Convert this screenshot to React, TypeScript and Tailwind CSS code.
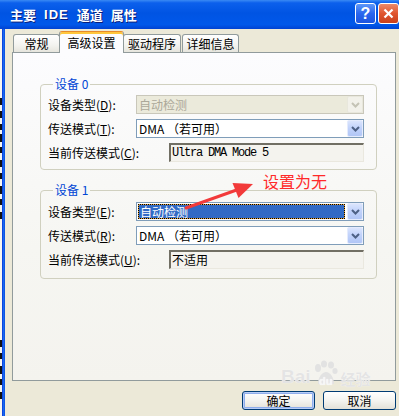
import React from "react";

const CJK = "font-['Noto_Sans_CJK_SC','Noto_Sans',sans-serif]";

function Chevron({ disabled }: { disabled?: boolean }) {
  return (
    <svg width="9" height="6" viewBox="0 0 9 6" className="block">
      <path
        d="M1 1 L4.5 4.5 L8 1"
        fill="none"
        stroke={disabled ? "#c4c3b5" : "#4d6185"}
        strokeWidth="2"
      />
    </svg>
  );
}

function DropBtn({ disabled }: { disabled?: boolean }) {
  return (
    <div
      className={`flex h-[17px] w-[16px] shrink-0 items-center justify-center rounded-[2px] border ${
        disabled
          ? "border-[#e8e7dc] bg-[#f2f1ea]"
          : "border-[#e4ebfd] bg-[linear-gradient(180deg,#dbe5fd_0%,#c2d3fb_45%,#b1c6f6_100%)]"
      }`}
    >
      <Chevron disabled={disabled} />
    </div>
  );
}

function Combo({
  text,
  disabled,
  selected,
}: {
  text: React.ReactNode;
  disabled?: boolean;
  selected?: boolean;
}) {
  return (
    <div
      className={`flex h-[19px] w-[228px] items-center border ${
        disabled ? "border-[#c9c7ba] bg-[#ebeadb]" : "border-[#7f9db9] bg-white"
      }`}
    >
      <div className="flex h-full flex-1 items-center pl-[1px] pr-[2px]">
        {selected ? (
          <span className="flex h-[15px] w-full border border-dotted border-black bg-[#e4a23a]">
            <span className="flex h-full w-full items-center bg-[#316ac5] pl-[1px] text-[12px] leading-none text-white">
              {text}
            </span>
          </span>
        ) : (
          <span
            className={`pl-[1px] text-[12px] leading-none ${
              disabled ? "text-[#aca899]" : "text-black"
            }`}
          >
            {text}
          </span>
        )}
      </div>
      <DropBtn disabled={disabled} />
    </div>
  );
}

function ReadBox({ children, mono }: { children: React.ReactNode; mono?: boolean }) {
  return (
    <div
      className={`flex h-[19px] w-[195px] items-center border-b border-l-2 border-r border-t-2 border-b-[#eae8df] border-l-[#716f64] border-r-[#eae8df] border-t-[#716f64] bg-[#f4f3ee] pl-[1px] text-[12px] leading-none text-black ${
        mono ? "font-['Liberation_Mono',monospace] tracking-[-1.2px]" : ""
      }`}
    >
      {children}
    </div>
  );
}

function Row({ label, children }: { label: React.ReactNode; children: React.ReactNode }) {
  return (
    <div className="flex items-center justify-between">
      <span className="text-[12px] leading-none text-black">{label}</span>
      {children}
    </div>
  );
}

function Group({
  title,
  children,
  className = "",
}: {
  title: string;
  children: React.ReactNode;
  className?: string;
}) {
  return (
    <fieldset
      className={`rounded-[4px] border border-[#d0d0bf] pl-[7px] pr-[12px] ${className}`}
    >
      <legend className="ml-[5px] px-[2px] text-[12px] leading-[14px] text-[#0046d5]">
        {title}
      </legend>
      <div className="flex flex-col gap-[5px]">{children}</div>
    </fieldset>
  );
}

function Tab({ label, active, w }: { label: string; active?: boolean; w: string }) {
  if (active) {
    return (
      <div
        className={`relative z-10 -mx-[1px] -mb-[1px] flex h-[22px] ${w} items-center justify-center rounded-t-[3px] border border-b-0 border-[#919b9c] border-t-[#e68b2c] bg-[#fcfcfe] text-[12px] text-black shadow-[inset_0_2px_0_#ffc73c]`}
      >
        <span className="mt-[1px]">{label}</span>
      </div>
    );
  }
  return (
    <div
      className={`flex h-[18px] ${w} items-center justify-center rounded-t-[3px] border border-b-0 border-[#919b9c] bg-[linear-gradient(180deg,#ffffff_0%,#f3f3ef_60%,#e6e5dd_100%)] text-[12px] text-black`}
    >
      {label}
    </div>
  );
}

function Btn({ label, def }: { label: string; def?: boolean }) {
  return (
    <div
      className={`flex h-[19px] w-[73px] items-center justify-center rounded-[3px] border border-[#003c74] bg-[linear-gradient(180deg,#ffffff_0%,#f4f4f0_50%,#e3e1d8_100%)] text-[12px] text-black ${
        def ? "shadow-[inset_0_0_0_1px_#b8cdf6,inset_0_0_0_2px_#8eadec]" : ""
      }`}
    >
      {label}
    </div>
  );
}

const u = (c: string) => <span className="underline underline-offset-1">{c}</span>;

// clipped right edges of the window behind the dialog
const behindMarks = [
  [98, 7], [111, 7], [124, 6], [134, 8], [147, 6], [160, 7], [173, 6], [186, 8],
  [199, 6], [212, 7], [340, 7], [353, 6], [366, 8], [379, 6], [392, 7],
];

export default function App() {
  return (
    <div className={`relative flex h-[416px] w-[399px] flex-col overflow-hidden bg-[#ece9d8] ${CJK}`}>
      {/* title bar */}
      <div className="flex h-[29px] shrink-0 items-center bg-[linear-gradient(180deg,#3a8af4_0%,#0c60ec_10%,#0054e3_45%,#0058ea_85%,#0042d2_100%)] pl-[10px]">
        <div className="flex flex-1 gap-[8px] text-[13px] font-bold text-white [text-shadow:1px_1px_0_#0a1e7a]">
          <span>主要</span>
          <span className="font-['Liberation_Sans',sans-serif] tracking-[1px]">IDE</span>
          <span>通道</span>
          <span>属性</span>
        </div>
        <div className="flex items-center gap-[2px] self-start pt-[3px]">
          <div className="flex h-[21px] w-[21px] items-center justify-center rounded-[3px] border border-white bg-[linear-gradient(180deg,#5f98f8_0%,#2a66ee_50%,#1d54df_100%)] font-['Liberation_Sans',sans-serif] text-[16px] font-bold leading-none text-white">
            ?
          </div>
          <div className="flex h-[21px] w-[21px] items-center justify-center rounded-[3px] border border-white bg-[linear-gradient(180deg,#ec8a6a_0%,#e0552e_50%,#c8401c_100%)]">
            <svg width="11" height="11" viewBox="0 0 11 11">
              <path d="M1.5 1.5 L9.5 9.5 M9.5 1.5 L1.5 9.5" stroke="white" strokeWidth="2.2" />
            </svg>
          </div>
        </div>
      </div>

      <div className="flex flex-1">
        {/* window behind */}
        <svg width="2" height="387" className="shrink-0 bg-[#f6f5f0]">
          {behindMarks.map(([y, h], i) => (
            <rect key={i} x="0" y={y - 29} width="2" height={h} fill="#111" />
          ))}
        </svg>
        {/* blue frame */}
        <div className="w-[3px] shrink-0 bg-[linear-gradient(90deg,#0831d9_0%,#166aee_50%,#0a48e0_100%)]" />

        <div className="flex flex-1 flex-col pl-[7px]">
          {/* tabs */}
          <div className="flex h-[23px] items-end pl-[1px]">
            <Tab label="常规" w="w-[47px]" />
            <Tab label="高级设置" active w="w-[65px]" />
            <Tab label="驱动程序" w="w-[58px]" />
            <div className="w-[1px]" />
            <Tab label="详细信息" w="w-[57px]" />
          </div>

          {/* panel */}
          <div className="h-[329px] w-[384px] border border-[#919b9c] bg-[linear-gradient(180deg,#fcfcfe_0%,#f6f6f2_60%,#f4f3ee_100%)] pl-[27px] pr-[18px] pt-[24px]">
            <Group title="设备 0" className="pb-[7px]">
              <div className="mt-[4px]">
                <Row label={<>设备类型({u("D")}):</>}>
                  <Combo text="自动检测" disabled />
                </Row>
              </div>
              <Row label={<>传送模式({u("T")}):</>}>
                <Combo text="DMA （若可用）" />
              </Row>
              <Row label={<>当前传送模式({u("C")}):</>}>
                <ReadBox mono>Ultra DMA Mode 5</ReadBox>
              </Row>
            </Group>

            <Group title="设备 1" className="mt-[13px] pb-[9px]">
              <div className="mt-[5px]">
                <Row label={<>设备类型({u("E")}):</>}>
                  <Combo text="自动检测" selected />
                </Row>
              </div>
              <Row label={<>传送模式({u("R")}):</>}>
                <Combo text="DMA （若可用）" />
              </Row>
              <Row label={<>当前传送模式({u("U")}):</>}>
                <ReadBox>不适用</ReadBox>
              </Row>
            </Group>
          </div>

          {/* buttons */}
          <div className="mt-[10px] flex justify-end gap-[8px] pr-[3px]">
            <Btn label="确定" def />
            <Btn label="取消" />
          </div>
        </div>
      </div>

      {/* red annotation */}
      <svg className="pointer-events-none absolute left-0 top-0" width="399" height="416">
        <line x1="186" y1="208" x2="238" y2="189.5" stroke="#f23a3a" strokeWidth="3" strokeLinecap="round" />
        <polygon points="253,184 232.5,183 238.5,198" fill="#f23a3a" />
      </svg>
      <div className="pointer-events-none absolute left-[263px] top-[172px] text-[16px] leading-[18px] text-[#ff2a2a]">
        设置为无
      </div>

      {/* watermark */}
      <div className="pointer-events-none absolute left-[281px] top-[360px] flex items-end text-[#e4e4e4] [text-shadow:0_0_1px_#ffffff]">
        <span className="font-['Liberation_Sans',sans-serif] text-[19px] font-bold leading-none">Bai</span>
        <svg width="28" height="28" viewBox="0 0 28 28" className="-mb-[2px]">
          <g fill="#e2e2e2">
            <ellipse cx="7" cy="8" rx="3" ry="4" />
            <ellipse cx="13" cy="4" rx="3" ry="3.5" />
            <ellipse cx="20" cy="5" rx="3" ry="3.5" />
            <ellipse cx="24" cy="11" rx="2.6" ry="3" />
            <path d="M7 24 C7 16 12 12 15 12 C19 12 23 17 23 24 Z" />
          </g>
          <text x="8" y="25" fontSize="11" fontWeight="bold" fill="#f6f6f6" fontFamily="Liberation Sans">du</text>
        </svg>
        <span className="ml-[2px] text-[15px] font-bold leading-none">经验</span>
      </div>
    </div>
  );
}
